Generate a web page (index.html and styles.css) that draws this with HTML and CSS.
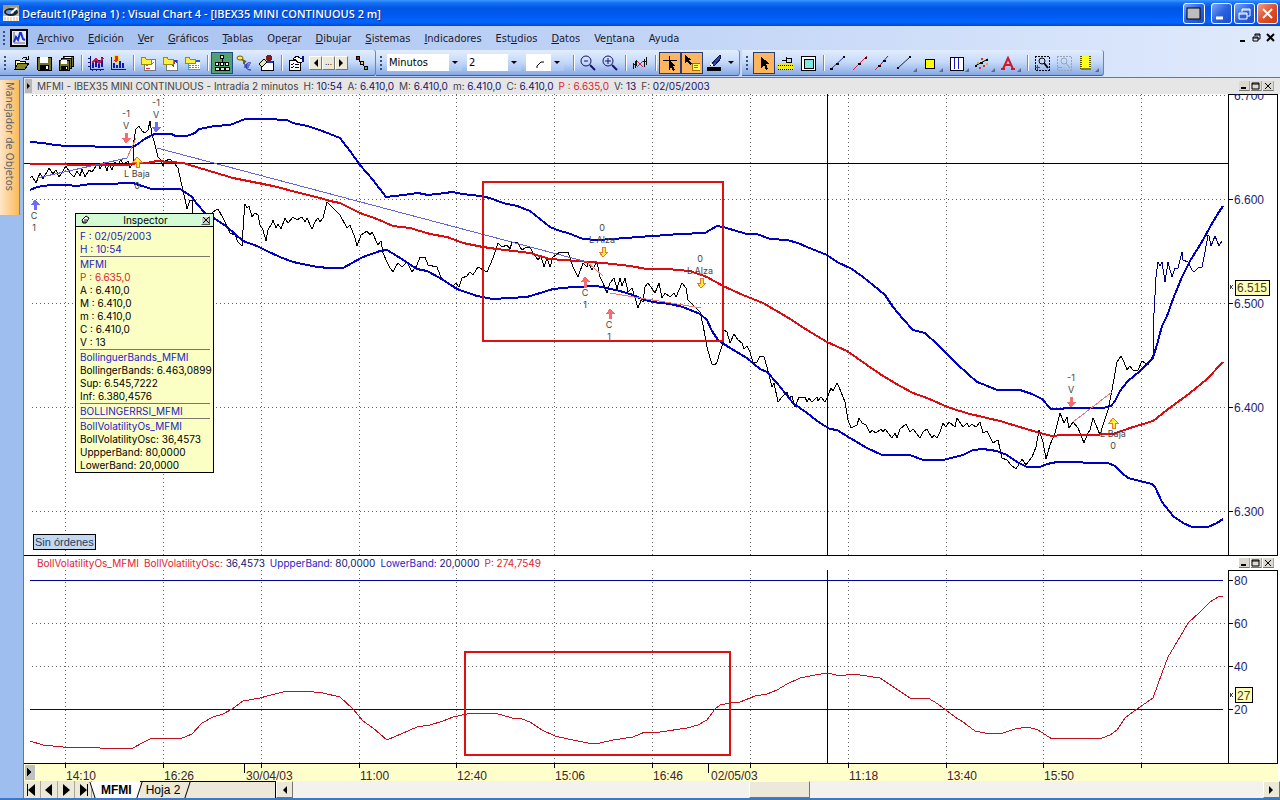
FILE: index.html
```html
<!DOCTYPE html>
<html lang="es">
<head>
    <meta charset="UTF-8">
    <meta name="viewport" content="width=device-width, initial-scale=1.0">
    <title>Visual Chart 4</title>
    <link rel="stylesheet" href="styles.css">
</head>
<body>
    <header class="titlebar">
        <svg class="app-logo" width="16" height="16" viewBox="0 0 16 16">
            <rect width="16" height="11" fill="#c9b99a"/>
            <path d="M0 0h16v4L9 2 0 5z" fill="#a89878"/>
            <ellipse cx="8" cy="7" rx="7" ry="4" fill="#10243c"/>
            <ellipse cx="7" cy="7" rx="4" ry="2" fill="#6aa0d8"/>
            <path d="M8 8l6-5" stroke="#fff" stroke-width="2"/>
            <rect y="11" width="16" height="5" fill="#fff"/>
            <path d="M1 13h14M1 15h14" stroke="#e8b070" stroke-dasharray="2 1"/>
        </svg>
        <span class="title-text">Default1(Página 1) : Visual Chart 4 - [IBEX35 MINI CONTINUOUS 2 m]</span>
        <button class="win-btn win-extra" aria-label="Monitor"><svg width="20" height="20" viewBox="0 0 20 20"><rect x="3" y="4" width="13" height="11" fill="#bdbdbd" stroke="#000"/></svg></button>
        <button class="win-btn" aria-label="Minimizar"><svg width="20" height="20" viewBox="0 0 20 20"><path d="M4 14h7" stroke="#fff" stroke-width="3"/></svg></button>
        <button class="win-btn" aria-label="Restaurar"><svg width="20" height="20" viewBox="0 0 20 20" fill="none" stroke="#fff"><path d="M7 8V5h8v7h-3M7 6h8"/><path d="M4 9h8v6H4zM4 10h8"/></svg></button>
        <button class="win-btn win-close" aria-label="Cerrar"><svg width="20" height="20" viewBox="0 0 20 20"><path d="M5 5l9 9M14 5l-9 9" stroke="#fff" stroke-width="2"/></svg></button>
    </header>

    <nav class="menubar">
        <span class="grip"></span>
        <svg class="doc-icon" width="18" height="18" viewBox="0 0 18 18"><rect x="1" y="1" width="16" height="16" fill="#e8ecff" stroke="#000" stroke-width="2"/><path d="M4 3v11h11" fill="none" stroke="#667"/><path d="M4 13l2-5 2 3 2-7h1l2 6 2 1" fill="none" stroke="#1a2ae0" stroke-width="2"/></svg>
        <a href="#"><u>A</u>rchivo</a>
        <a href="#"><u>E</u>dición</a>
        <a href="#"><u>V</u>er</a>
        <a href="#"><u>G</u>ráficos</a>
        <a href="#"><u>T</u>ablas</a>
        <a href="#">Ope<u>r</u>ar</a>
        <a href="#"><u>D</u>ibujar</a>
        <a href="#"><u>S</u>istemas</a>
        <a href="#"><u>I</u>ndicadores</a>
        <a href="#">Est<u>u</u>dios</a>
        <a href="#"><u>D</u>atos</a>
        <a href="#">Ve<u>n</u>tana</a>
        <a href="#">Ayuda</a>
        <div class="mdi-buttons">
            <button aria-label="Minimizar gráfico"><svg width="10" height="10" viewBox="0 0 10 10"><path d="M2 8h5" stroke="#000" stroke-width="2"/></svg></button>
            <button aria-label="Restaurar gráfico"><svg width="10" height="10" viewBox="0 0 10 10" fill="none" stroke="#000"><path d="M3 3V1h5v5H6M3 2h5M1 4h5v4H1zM1 5h5"/></svg></button>
            <button aria-label="Cerrar gráfico"><svg width="10" height="10" viewBox="0 0 10 10"><path d="M1 1l7 7M8 1L1 8" stroke="#000" stroke-width="2"/></svg></button>
        </div>
    </nav>

    <div class="toolbars">
        <div class="toolbar">
            <span class="grip"></span>
            <button class="tool" aria-label="Abrir"><svg viewBox="0 0 16 16"><path d="M1 14V5h4l1 1h5v3" fill="#ffff9c" stroke="#000"/><path d="M1 14l3-6h11l-4 6z" fill="#84842c" stroke="#000"/><path d="M8 4q3-4 5 0M14 1v3h-3" fill="none" stroke="#000"/></svg></button>
            <button class="tool" aria-label="Guardar"><svg viewBox="0 0 16 16"><path d="M1 2h14v13H2l-1-1z" fill="#74742c" stroke="#000"/><rect x="4" y="2" width="8" height="6" fill="#fff"/><rect x="4" y="10" width="9" height="5" fill="#000"/><rect x="10" y="11" width="2" height="3" fill="#fff"/></svg></button>
            <button class="tool" aria-label="Guardar todo"><svg viewBox="0 0 16 16"><path d="M5 1h10v10H5z" fill="#74742c" stroke="#000"/><path d="M3 3h10v10H3z" fill="#74742c" stroke="#000"/><path d="M1 5h10v10H1z" fill="#74742c" stroke="#000"/><path d="M3 5h6v4H3zM7 2h6v1H7zM5 4h6v0z" fill="#fff"/><path d="M3 11h7v4H3z"/><path d="M8 12h1v2H8z" fill="#fff"/></svg></button>
            <span class="sep"></span>
            <button class="tool" aria-label="Gráfico de barras"><svg viewBox="0 0 16 16"><path d="M2 1v13h14M0 3h2M0 7h2M0 11h2M4 14v2M8 14v2M12 14v2" fill="none" stroke="#10107c"/><path d="M5 6v7M8 4v8M11 5v8M14 2v10" stroke="#1616a8" stroke-width="2"/><path d="M4 8l4-4 3 4 4-5" fill="none" stroke="#d81830" stroke-width="2"/></svg></button>
            <button class="tool" aria-label="Insertar indicador"><svg viewBox="0 0 16 16"><path d="M1 2v12h15" fill="none" stroke="#10107c"/><path d="M4 8v5M7 10v3M10 6v7M13 8v5" stroke="#1616a8" stroke-width="2"/><path d="M4 0h4v4h2l-4 4-4-4h2z" fill="#e83020" stroke="#f8e030"/></svg></button>
            <span class="sep"></span>
            <button class="tool" aria-label="Nuevo gráfico"><svg viewBox="0 0 16 16"><rect x="4" y="4" width="11" height="11" fill="#fff" stroke="#777"/><path d="M6 11l3-2 2 1 3-3" fill="none" stroke="#30b050"/><path d="M6 13h4" stroke="#d33"/><path d="M1 2h4l1 2h5v5H1z" fill="#fff040" stroke="#9a8a10"/></svg></button>
            <button class="tool" aria-label="Nueva tabla"><svg viewBox="0 0 16 16"><rect x="4" y="5" width="11" height="10" fill="#fff" stroke="#777"/><path d="M8 8l4 5 1-8" fill="#e02020"/><path d="M12 5h3v4z" fill="#2038c0"/><path d="M1 2h4l1 2h5v5H1z" fill="#fff040" stroke="#9a8a10"/></svg></button>
            <button class="tool" aria-label="Nueva página"><svg viewBox="0 0 16 16"><rect x="4" y="5" width="12" height="9" fill="#fff" stroke="#59a"/><path d="M4 6h12" stroke="#2060d0" stroke-width="2"/><path d="M5 10h10M5 12h10" stroke="#3a8cd0" stroke-dasharray="2 1"/><path d="M1 2h4l1 2h5v4H1z" fill="#fff040" stroke="#9a8a10"/></svg></button>
            <span class="sep"></span>
            <button class="tool tool-green" aria-label="Manejador de objetos"><svg viewBox="0 0 16 16" fill="none" stroke="#000"><path d="M8 4v5M3 9V7h10v2"/><circle cx="8" cy="2" r="2" fill="#d8f0d8"/><circle cx="3" cy="9" r="2" fill="#fff"/><circle cx="8" cy="9" r="2" fill="#fff"/><circle cx="13" cy="9" r="2" fill="#fff"/><path d="M1 15v-3h4v3zM6 15v-3h4v3zM11 15v-3h4v3z" fill="#d8f0d8"/></svg></button>
            <button class="tool" aria-label="Divisas"><svg class="smooth" viewBox="0 0 16 16" fill="none"><path d="M5 4l5 3M8 6v3" stroke="#6a6210" stroke-width="2"/><ellipse cx="4" cy="3" rx="3" ry="2" stroke="#6a6210" fill="#ffef40"/><path d="M15 8q-5-1-5 3t5 4M8 10h6M8 12h5" stroke="#1818b0"/></svg></button>
            <button class="tool" aria-label="Orden"><svg viewBox="0 0 16 16"><path d="M3 6h12v9H3z" fill="#fff" stroke="#000"/><path d="M3 7h12" stroke="#1040c0" stroke-width="2"/><path d="M1 9l5-5 3 3-5 5z" fill="#e8e8b0" stroke="#000"/><circle cx="11" cy="3" r="3" fill="#801818"/></svg></button>
            <span class="sep"></span>
            <button class="tool" aria-label="Propiedades"><svg viewBox="0 0 16 16"><rect x="1" y="5" width="11" height="10" fill="#fff" stroke="#000"/><path d="M3 9l1 1 2-2M7 9h4M3 12l1 1 2-2M7 12h4" fill="none" stroke="#000"/><path d="M5 4l4-3 3 2h2v4l-4 1-2-3z" fill="#fff" stroke="#000"/><path d="M14 1h2v6h-2z" fill="#10107c"/></svg></button>
            <div class="spin">
                <button aria-label="Anterior"><svg width="5" height="8" viewBox="0 0 5 8"><path d="M5 0v8L1 4z"/></svg></button>
                <button>...</button>
                <button aria-label="Siguiente"><svg width="5" height="8" viewBox="0 0 5 8"><path d="M0 0v8l4-4z"/></svg></button>
            </div>
            <button class="tool" aria-label="Enlaces"><svg viewBox="0 0 16 16"><path d="M3 3l9 10" stroke="#000"/><rect x="2" y="1" width="3" height="3" fill="#b01818" stroke="#000"/><rect x="6" y="6" width="3" height="3" fill="#e8d820" stroke="#000"/><rect x="10" y="11" width="3" height="3" fill="#58b858" stroke="#000"/></svg></button>
        </div>
        <div class="toolbar">
            <span class="grip"></span>
            <label class="combo combo-unit"><select aria-label="Unidad"><option>Minutos</option></select></label>
            <label class="combo combo-num"><select aria-label="Compresión"><option>2</option></select></label>
            <label class="combo combo-line"><select aria-label="Tipo de línea"><option></option></select><svg width="8" height="8" viewBox="0 0 8 8"><path d="M1 8V6l4-4h3" fill="none" stroke="#000"/></svg></label>
            <span class="sep"></span>
            <button class="tool" aria-label="Alejar"><svg class="smooth" viewBox="0 0 16 16" fill="none" stroke="#14146c"><circle cx="6" cy="6" r="5"/><path d="M4 6h4"/><path d="M10 10l5 5" stroke-width="2"/></svg></button>
            <button class="tool" aria-label="Acercar"><svg class="smooth" viewBox="0 0 16 16" fill="none" stroke="#14146c"><circle cx="6" cy="6" r="5"/><path d="M3 6h6M6 3v6"/><path d="M10 10l5 5" stroke-width="2"/></svg></button>
            <span class="sep"></span>
            <button class="tool" aria-label="Borrar serie"><svg viewBox="0 0 16 16" fill="none" stroke="#111"><path d="M1 8v6M3 6v7M1 9h3M4 5v6M12 4v8M14 2v8M11 6h4"/><path d="M5 6l6 6M11 6l-6 6" stroke="#e02040"/></svg></button>
            <span class="sep"></span>
            <button class="tool tool-on" aria-label="Cursor"><svg viewBox="0 0 16 16"><path d="M1 5h14M7 1v14" stroke="#000"/><path d="M7 5v9l2-2 2 4 2-1-2-4h3z"/></svg></button>
            <button class="tool tool-on" aria-label="Inspector"><svg viewBox="0 0 16 16"><path d="M1 0v8l2-2 3 4 2-1-3-4h3z"/><rect x="8" y="8" width="8" height="7" fill="#ffff50" stroke="#a07000"/><path d="M10 10h4M10 12h4" stroke="#a07000"/></svg></button>
            <button class="tool" aria-label="Color de línea"><svg viewBox="0 0 16 16"><path d="M5 10l6-7 3-3 1 3-6 7z" fill="#2840b8" stroke="#10184c"/><path d="M4 8l4 2-3 1z" fill="#fff"/><rect x="1" y="12" width="14" height="4"/></svg></button>
            <button class="tool-drop" aria-label="Más colores"></button>
        </div>
        <div class="toolbar toolbar-draw">
            <span class="grip"></span>
            <button class="tool tool-on" aria-label="Seleccionar"><svg viewBox="0 0 16 16"><path d="M5 2v11l3-3 2 5 2-1-2-5h4z"/></svg></button>
            <button class="tool" aria-label="Regla"><svg viewBox="0 0 16 16"><path d="M4 5h4M8 2v6M8 3h5v4H8" fill="none" stroke="#000"/><rect x="0" y="9" width="16" height="6" fill="#f0e820"/><path d="M0 10h16M0 14h16" stroke="#000" stroke-dasharray="1 1"/></svg></button>
            <button class="tool" aria-label="Marco"><svg viewBox="0 0 16 16"><rect x="1" y="1" width="14" height="14" fill="#fff" stroke="#000"/><rect x="4" y="4" width="9" height="9" fill="#80e8e0" stroke="#000"/></svg></button>
            <span class="sep"></span>
            <button class="tool" aria-label="Segmento"><svg class="smooth" viewBox="0 0 16 16"><path d="M1 14L14 2" stroke="#2030b0"/><path d="M0 13h3v2H0zM6 8h3v2H6zM13 1h2v2h-2z"/></svg></button>
            <button class="tool" aria-label="Semirrecta"><svg class="smooth" viewBox="0 0 16 16"><path d="M1 15L15 1" stroke="#e02040"/><path d="M6 8h3v2H6zM13 2h2v2h-2z"/></svg></button>
            <button class="tool" aria-label="Recta"><svg class="smooth" viewBox="0 0 16 16"><path d="M1 15l6-6" stroke="#e02040"/><path d="M7 9l7-8" stroke="#2030b0"/><path d="M4 10h3v2H4zM9 5h3v2H9z"/></svg></button>
            <button class="tool tool-more" aria-label="Líneas"><svg class="smooth" viewBox="0 0 16 16"><path d="M2 13L14 2" stroke="#223"/><path d="M1 12h2v2H1zM13 1h2v2h-2z"/></svg></button>
            <button class="tool tool-more" aria-label="Figuras"><svg viewBox="0 0 16 16"><rect x="3" y="4" width="9" height="9" fill="#ffff00" stroke="#000"/></svg></button>
            <button class="tool tool-more" aria-label="Bandas"><svg viewBox="0 0 16 16"><rect x="2" y="2" width="13" height="13" fill="#fff" stroke="#000"/><path d="M6 3v11M10 3v11" stroke="#1818c0"/></svg></button>
            <button class="tool tool-more" aria-label="Regresión"><svg class="smooth" viewBox="0 0 16 16"><path d="M1 11l13-7" stroke="#000"/><path d="M1 10h2v2H1zM6 7h3v2H6zM12 4h2v2h-2z"/><path d="M7 3h2v2H7zM9 10h2v2H9zM5 12h2v2H5z" fill="#e03020"/><path d="M3 7h2v2H3zM12 8h2v2h-2z" fill="#e0b020"/></svg></button>
            <button class="tool tool-more" aria-label="Texto"><svg class="smooth" viewBox="0 0 16 16" fill="none" stroke="#d01828" stroke-width="2"><path d="M3 14L8 3l5 11M5 10h6M1 14h4M11 14h4"/></svg></button>
            <span class="sep"></span>
            <button class="tool" aria-label="Zoom de área"><svg viewBox="0 0 16 16" fill="none" stroke="#000"><rect x="1" y="1" width="14" height="14" stroke-dasharray="2 1"/><g class="smooth"><circle cx="8" cy="6" r="3"/><path d="M10 8l4 5" stroke-width="2"/></g><path d="M1 12h5M3 10v5" stroke="#b01848"/></svg></button>
            <button class="tool" aria-label="Quitar zoom" disabled><svg viewBox="0 0 16 16" fill="none" stroke="#98a4b4"><rect x="1" y="1" width="14" height="14" stroke-dasharray="2 1"/><g class="smooth"><circle cx="8" cy="6" r="3"/><path d="M10 8l4 5"/></g><path d="M2 12h4"/></svg></button>
            <button class="tool tool-more" aria-label="Notas"><svg viewBox="0 0 16 16"><path d="M3 1h10v13H3z" fill="#ffff20"/><path d="M3 1v13M12 1v13" stroke="#504800" stroke-dasharray="1 1" stroke-width="2"/><path d="M3 14h10" stroke="#8a7c00" stroke-width="2"/></svg></button>
        </div>
    </div>

    <main class="workspace">
        <aside class="sidebar"><button class="side-tab">Manejador de Objetos</button></aside>

        <section class="sheet">
            <div class="pane-head">
                <span class="pane-play"></span>
                <span class="pane-name">MFMI - IBEX35 MINI CONTINUOUS - Intradía 2 minutos</span>
                <span>H: <b>10:54</b></span>
                <span>A: <b>6.410,0</b></span>
                <span>M: <b>6.410,0</b></span>
                <span>m: <b>6.410,0</b></span>
                <span>C: <b>6.410,0</b></span>
                <span class="red">P : 6.635,0</span>
                <span>V: <b>13</b></span>
                <span>F: <b>02/05/2003</b></span>
                <div class="pane-btns">
                    <button aria-label="Minimizar panel"><svg viewBox="0 0 10 8"><path d="M2 6h5" stroke="#000" stroke-width="2"/></svg></button>
                    <button aria-label="Maximizar panel"><svg viewBox="0 0 10 8"><path d="M1 1h7v6H1zM1 2h7" fill="none" stroke="#000"/></svg></button>
                    <button aria-label="Cerrar panel"><svg viewBox="0 0 10 8"><path d="M2 1l6 6M8 1L2 7" stroke="#000"/></svg></button>
                </div>
            </div>

            <div class="chart-pane">
                <svg class="chart" viewBox="24 94 1256 462">
                    <path class="grid" d="M32 95H1228M32 199H1228M32 303H1228M32 407H1228M32 511H1228M65 94V555M163 94V555M261 94V555M359 94V555M456 94V555M554 94V555M652 94V555M750 94V555M848 94V555M946 94V555M1043 94V555M1141 94V555"/>
                    <path class="cross" d="M24 163H1228M827 94V555"/>

                    <!-- price -->
                    <polyline class="price" points="30,178 32,176 36,183 40,173 43,179 49,168 53,174 56,170 59,177 66,166 70,173 74,177 77,171 80,176 82,169 85,177 89,170 92,172 98,163 100,169 104,162 107,171 109,163 112,170 115,162 118,166 121,159 123,165 128,161 130,168 133,162 134,140 136,129 139,126 142,131 145,133 148,130 150,121 152,134 155,145 158,157 161,160 163,166 165,161 170,159 174,163 178,168 181,182 185,199 187,209 190,200 192,200 193,214 205,222 213,212 218,209 223,218 230,233 235,235 238,242 242,246 244,215 245,204 247,208 249,206 252,217 255,213 258,215 260,225 263,230 266,241 268,230 272,223 273,220 276,228 278,224 281,229 285,218 288,223 293,217 297,220 302,217 305,222 307,218 312,229 315,222 318,218 320,222 323,218 327,202 330,205 340,215 347,228 350,225 355,238 357,246 361,235 364,233 367,231 370,235 372,232 378,245 381,241 383,253 387,262 390,268 393,272 395,268 398,263 402,267 407,262 412,272 417,265 420,257 425,257 428,265 437,267 442,280 447,282 452,287 456,283 459,287 462,278 467,276 470,272 473,275 478,267 487,272 493,258 498,243 502,247 507,245 510,249 512,242 517,242 522,250 527,247 530,247 533,253 538,260 541,256 544,267 547,258 550,267 553,257 560,252 568,252 573,267 578,277 583,263 587,267 588,262 592,270 597,262 600,277 603,283 607,293 610,283 614,278 617,289 620,278 622,286 625,278 628,292 632,288 638,308 641,300 643,302 645,287 648,283 653,290 655,293 659,283 662,298 665,293 670,297 674,293 676,297 682,283 686,288 688,300 695,307 700,312 703,325 707,347 710,358 712,364 715,365 717,362 720,352 723,343 724,330 727,332 730,343 734,334 738,340 742,343 744,349 747,346 750,352 753,363 757,362 760,356 764,357 767,367 772,387 774,383 778,402 782,397 787,392 789,398 792,396 795,407 799,397 805,397 807,402 809,398 812,402 817,397 818,401 821,397 825,402 827,398 831,388 833,391 837,383 839,387 845,402 848,420 851,428 857,425 859,418 862,423 866,425 870,433 872,430 876,433 881,429 883,432 885,429 892,438 895,433 897,438 900,429 906,424 908,428 910,432 913,429 920,438 923,432 927,429 932,438 934,435 937,438 940,432 943,423 946,427 949,422 955,427 957,418 963,427 967,423 969,427 972,424 976,427 980,422 983,433 987,431 993,443 998,440 1002,458 1007,460 1011,465 1016,469 1022,459 1026,465 1032,457 1036,447 1039,430 1043,442 1046,459 1050,445 1055,433 1060,413 1064,423 1067,417 1069,428 1073,422 1078,428 1084,443 1087,435 1090,430 1093,418 1096,425 1100,435 1103,425 1108,410 1112,390 1115,373 1117,362 1121,356 1124,362 1127,370 1130,366 1133,370 1138,370 1142,361 1148,365 1153,355"/>
                    <polyline class="price navy" points="1153,355 1154,313 1156,277 1158,262 1160,266 1162,262 1165,282 1168,262 1172,277 1175,268 1178,268 1182,252 1183,260 1188,262 1192,270 1194,272 1198,268 1202,267 1205,252 1208,235 1209,236 1211,246 1215,236 1219,246 1222,241"/>

                    <!-- bollinger bands -->
                    <polyline class="band" points="30,142 43,143 55,145 67,146 93,146 97,147 133,147 138,144 143,140 152,135 155,134 172,134 175,136 187,136 195,133 199,129 215,126 230,125 245,119 267,119 287,120 293,123 307,126 317,129 330,134 340,138 350,151 360,165 373,180 386,197 403,195 418,193 428,195 445,193 452,192 463,194 480,196 490,198 503,203 517,206 530,211 540,219 550,227 560,231 568,233 583,239 597,240 613,239 638,237 653,236 680,234 705,233 710,230 717,226 723,227 733,230 747,234 757,234 770,239 787,240 798,243 807,247 827,255 837,262 852,269 863,277 873,285 885,295 893,307 903,319 913,330 925,333 938,345 957,364 977,382 985,385 997,390 1020,390 1032,394 1042,399 1051,409 1060,409 1067,408 1103,408 1111,406 1115,401 1120,391 1128,381 1140,371 1153,358 1158,341 1162,326 1167,316 1173,299 1182,277 1190,261 1203,240 1210,227 1217,215 1223,206"/>
                    <polyline class="band" points="30,190 37,187 50,185 67,185 77,186 90,184 103,184 133,183 142,186 152,189 180,189 185,192 192,197 197,204 205,213 217,220 227,227 243,241 257,246 267,251 280,257 293,262 317,267 330,268 343,268 352,263 363,257 380,251 387,250 397,256 417,269 427,271 440,278 457,289 477,296 493,299 527,297 537,294 553,289 573,287 597,286 620,291 633,295 642,299 653,302 670,304 683,307 700,314 707,320 712,331 718,340 730,348 747,358 760,369 767,372 777,383 793,403 807,413 820,423 830,429 837,430 850,438 867,448 882,455 910,455 923,460 943,460 963,455 973,450 983,449 997,451 1007,455 1017,462 1027,467 1040,467 1047,464 1057,462 1108,463 1115,466 1122,473 1128,478 1152,484 1155,487 1162,502 1173,516 1183,523 1192,527 1208,527 1217,523 1223,519"/>
                    <polyline class="band mean" points="30,164 60,164 73,165 127,165 137,163 147,163 157,161 170,162 183,163 193,166 213,172 233,178 253,182 273,186 300,193 320,198 330,201 340,203 360,213 377,219 393,226 410,228 430,234 447,237 463,243 483,247 497,249 530,253 550,259 577,261 603,263 630,266 647,269 667,269 690,271 707,277 723,286 743,295 763,303 787,317 807,330 827,342 847,351 867,365 883,376 900,386 913,393 927,398 950,408 970,414 1000,421 1023,428 1040,433 1052,436 1063,435 1087,435 1113,434 1130,428 1153,421 1167,410 1190,393 1207,379 1223,362"/>

                    <!-- trades -->
                    <path class="trade-win" d="M37 178L127 158M157 148L587 262"/>
                    <path class="trade-loss" d="M127 158L136 138M587 262L603 276M610 293L701 308M1073 422L1112 392"/>
                    <g class="arrow-red">
                        <path d="M125 133h3v5h3l-5 6-4-6h3z"/>
                        <path d="M1070 397h3v5h3l-5 6-4-6h3z"/>
                        <path d="M584 288h3v-6h3l-5-6-4 6h3z"/>
                        <path d="M609 319h3v-5h3l-5-6-4 6h3z"/>
                    </g>
                    <g class="arrow-blue">
                        <path d="M155 122h3v5h3l-5 6-4-6h3z"/>
                        <path d="M34 210h3v-5h3l-5-6-4 6h3z"/>
                    </g>
                    <g class="arrow-gold">
                        <path d="M136 167h3v-5h3l-5-5-4 5h3z"/>
                        <path d="M602 247h3v5h3l-5 5-4-5h3z"/>
                        <path d="M700 278h3v5h3l-5 5-4-5h3z"/>
                        <path d="M1112 428h3v-5h3l-5-5-4 5h3z"/>
                    </g>
                    <g class="trade-text">
                        <text x="126" y="117">-1</text><text x="126" y="129">V</text>
                        <text x="156" y="106">-1</text><text x="156" y="118">V</text>
                        <text x="137" y="177">L Baja</text><text x="137" y="189">0</text>
                        <text x="34" y="219">C</text><text x="34" y="231">1</text>
                        <text x="602" y="231">0</text><text x="602" y="243">L Alza</text>
                        <text x="585" y="296">C</text><text x="585" y="308">1</text>
                        <text x="609" y="328">C</text><text x="609" y="340">1</text>
                        <text x="700" y="262">0</text><text x="700" y="274">L Alza</text>
                        <text x="1071" y="381">-1</text><text x="1071" y="393">V</text>
                        <text x="1113" y="437">L Baja</text><text x="1113" y="449">0</text>
                    </g>
                    <rect class="highlight" x="483" y="182" width="240" height="159"/>

                    <!-- price axis -->
                    <path class="frame" d="M1228 94V555M1277 94V555M24 555H1278M1228 94H1278M1228 199h5M1228 303h5M1228 407h5M1228 511h5"/>
                    <g class="scale">
                        <text x="1234" y="100">6.700</text>
                        <text x="1234" y="204">6.600</text>
                        <text x="1234" y="308">6.500</text>
                        <text x="1234" y="412">6.400</text>
                        <text x="1234" y="516">6.300</text>
                        <path class="pointer" d="M1233 285l-2 2 2 2M1231 285l-1 2 1 2"/>
                        <rect class="tag" x="1235" y="280" width="34" height="15"/>
                        <text class="tag-text" x="1237" y="292">6.515</text>
                    </g>
                </svg>

                <div class="inspector">
                    <div class="inspector-head">
                        <svg width="10" height="10" viewBox="0 0 10 10"><path d="M2 5l4-4 3 2-3 5H3z" fill="#fff" stroke="#000"/><path d="M2 7h4M4 5h3" stroke="#000"/></svg>
                        <span>Inspector</span>
                        <button aria-label="Cerrar inspector"><svg width="6" height="6" viewBox="0 0 6 6"><path d="M0 0l6 6M6 0L0 6" stroke="#000"/></svg></button>
                    </div>
                    <div class="inspector-body">
                        <div class="group">
                            <p class="blue">F : 02/05/2003</p>
                            <p class="blue">H : 10:54</p>
                        </div>
                        <div class="group">
                            <p class="blue">MFMI</p>
                            <p class="red">P : 6.635,0</p>
                            <p>A : 6.410,0</p>
                            <p>M : 6.410,0</p>
                            <p>m : 6.410,0</p>
                            <p>C : 6.410,0</p>
                            <p>V : 13</p>
                        </div>
                        <div class="group">
                            <p class="blue">BollinguerBands_MFMI</p>
                            <p>BollingerBands: 6.463,0899</p>
                            <p>Sup: 6.545,7222</p>
                            <p>Inf: 6.380,4576</p>
                        </div>
                        <div class="group">
                            <p class="blue">BOLLINGERRSI_MFMI</p>
                        </div>
                        <div class="group">
                            <p class="blue">BollVolatilityOs_MFMI</p>
                            <p>BollVolatilityOsc: 36,4573</p>
                            <p>UppperBand: 80,0000</p>
                            <p>LowerBand: 20,0000</p>
                        </div>
                    </div>
                </div>
                <button class="orders">Sin órdenes</button>
            </div>

            <div class="pane-head pane-head-osc">
                <span class="red">BollVolatilityOs_MFMI</span>
                <span class="red">BollVolatilityOsc: <b>36,4573</b></span>
                <span class="blue">UppperBand: <b>80,0000</b></span>
                <span class="blue">LowerBand: <b>20,0000</b></span>
                <span class="red">P: 274,7549</span>
                <div class="pane-btns">
                    <button aria-label="Minimizar panel"><svg viewBox="0 0 10 8"><path d="M2 6h5" stroke="#000" stroke-width="2"/></svg></button>
                    <button aria-label="Maximizar panel"><svg viewBox="0 0 10 8"><path d="M1 1h7v6H1zM1 2h7" fill="none" stroke="#000"/></svg></button>
                    <button aria-label="Cerrar panel"><svg viewBox="0 0 10 8"><path d="M2 1l6 6M8 1L2 7" stroke="#000"/></svg></button>
                </div>
            </div>

            <svg class="chart chart-osc" viewBox="24 570 1256 211">
                <path class="grid" d="M32 623H1228M32 666H1228M65 570V763M163 570V763M261 570V763M359 570V763M456 570V763M554 570V763M652 570V763M750 570V763M848 570V763M946 570V763M1043 570V763M1141 570V763"/>
                <path class="level" d="M30 580H1223M30 709H1223"/>
                <path class="cross" d="M827 570V763"/>
                <polyline class="osc" points="30,741 43,745 63,747 80,747 100,748 133,748 142,743 152,738 180,739 192,734 202,723 213,717 223,714 232,709 243,701 260,698 267,696 283,692 305,691 323,693 340,697 353,709 363,721 373,728 387,740 417,727 430,725 443,721 453,717 467,714 477,713 495,713 512,718 522,719 530,722 542,730 555,736 568,739 588,743 600,743 613,740 633,737 645,732 660,732 687,728 698,725 707,720 715,709 720,705 730,703 740,702 755,696 767,694 777,690 787,684 800,678 815,675 828,673 840,676 853,674 880,678 895,688 910,698 928,698 938,704 955,717 963,722 975,731 985,733 1000,734 1015,729 1028,727 1038,730 1052,739 1060,738 1102,738 1110,735 1117,730 1125,718 1137,709 1153,698 1162,673 1168,657 1180,637 1188,623 1200,612 1210,602 1218,597 1223,596"/>
                <rect class="highlight" x="465" y="652" width="265" height="103"/>
                <g class="scale">
                    <text x="1234" y="585">80</text>
                    <text x="1234" y="628">60</text>
                    <text x="1234" y="671">40</text>
                    <text x="1234" y="714">20</text>
                    <path class="pointer" d="M1233 693l-2 2 2 2M1231 693l-1 2 1 2"/>
                    <rect class="tag" x="1235" y="687" width="17" height="15"/>
                    <text class="tag-text" x="1237" y="700">27</text>
                </g>

                <!-- time axis -->
                <rect class="time-bg" x="24" y="764" width="1254" height="17"/>
                <rect class="time-btn" x="25" y="765" width="10" height="15"/>
                <path d="M27 768v8l4-4z"/>
                <path class="frame" d="M24 763H1278M1228 763V570H1277V763M1228 580h5M1228 623h5M1228 666h5M1228 709h5M65 763v5M163 763v5M244 763v10M261 763v5M359 763v5M456 763v5M554 763v5M652 763v5M708 763v10M750 763v5M848 763v5M946 763v5M1043 763v5M1141 763v5"/>
                <g class="time">
                    <text x="66" y="780">14:10</text>
                    <text x="164" y="780">16:26</text>
                    <text x="246" y="780">30/04/03</text>
                    <text x="360" y="780">11:00</text>
                    <text x="457" y="780">12:40</text>
                    <text x="555" y="780">15:06</text>
                    <text x="653" y="780">16:46</text>
                    <text x="711" y="780">02/05/03</text>
                    <text x="849" y="780">11:18</text>
                    <text x="947" y="780">13:40</text>
                    <text x="1044" y="780">15:50</text>
                </g>
            </svg>

            <footer class="tabs">
                <button class="nav-btn" aria-label="Primera hoja"><svg viewBox="0 0 16 12"><path d="M3 0h1v12H3zM11 0v12L4 6z"/></svg></button>
                <button class="nav-btn" aria-label="Hoja anterior"><svg viewBox="0 0 16 12"><path d="M11 0v12L4 6z"/></svg></button>
                <button class="nav-btn" aria-label="Hoja siguiente"><svg viewBox="0 0 16 12"><path d="M5 0v12l7-6z"/></svg></button>
                <button class="nav-btn" aria-label="Última hoja"><svg viewBox="0 0 16 12"><path d="M5 0v12l7-6zM12 0h1v12h-1z"/></svg></button>
                <button class="tab tab-active">MFMI</button>
                <button class="tab">Hoja 2</button>
                <span class="tab-rest"></span>
                <button class="scroll-btn" aria-label="Desplazar a la izquierda"><svg width="5" height="8" viewBox="0 0 5 8"><path d="M5 0v8L1 4z"/></svg></button>
                <div class="scroll-track"><div class="scroll-thumb"></div></div>
                <button class="scroll-btn" aria-label="Desplazar a la derecha"><svg width="5" height="8" viewBox="0 0 5 8"><path d="M0 0v8l4-4z"/></svg></button>
            </footer>
        </section>
    </main>
</body>
</html>
```
FILE: styles.css
```css
* {
    box-sizing: border-box;
}

body {
    margin: 0;
    min-height: 100vh;
    display: flex;
    flex-direction: column;
    background: #9fbef0;
    border-bottom: 2px solid #3a78d0;
    font-family: "DejaVu Sans Condensed", "DejaVu Sans", sans-serif;
    font-size: 11px;
    color: #000;
}

button {
    padding: 0;
    border: 0;
    background: none;
    font: inherit;
    color: inherit;
}

svg {
    display: block;
}

/* title bar */
.titlebar {
    display: flex;
    align-items: center;
    height: 26px;
    padding: 0 2px 0 3px;
    background: linear-gradient(#3c96ff 0, #1470f4 3px, #0055e5 8px, #0058ee 14px, #0066ff 22px, #0048d0 26px);
}

.title-text {
    flex: 1;
    margin-left: 3px;
    color: #fff;
    font-family: "Open Sans", "Noto Sans", sans-serif;
    font-size: 11px;
    font-weight: 600;
    white-space: nowrap;
    text-shadow: 1px 1px 0 #0a2c8c;
}

.win-btn {
    width: 21px;
    height: 21px;
    margin-left: 2px;
    border: 1px solid #fff;
    border-radius: 3px;
    background: linear-gradient(135deg, #7ea6f4, #2a62e0 50%, #1a4cd0);
}

.win-extra {
    width: 22px;
    margin-right: 4px;
}

.win-close {
    background: linear-gradient(135deg, #f0a088, #e0502c 50%, #c83c14);
}

/* menu */
.menubar {
    display: flex;
    align-items: center;
    gap: 14px;
    height: 24px;
    padding: 0 4px 0 3px;
    background: linear-gradient(90deg, #a4c0f0, #c4d6f7 55%, #e0eafc);
}

.menubar a {
    color: #1a1a2c;
    text-decoration: none;
}

.grip {
    flex: none;
    width: 2px;
    height: 14px;
    background: repeating-linear-gradient(#33517f 0 2px, transparent 2px 4px);
}

.menubar .grip {
    margin-right: -9px;
}

.doc-icon {
    margin-right: -5px;
}

.mdi-buttons {
    display: flex;
    gap: 4px;
    margin-left: auto;
}

/* toolbars */
.toolbars {
    display: flex;
    height: 27px;
    background: linear-gradient(90deg, #a4c0f0, #c4d6f7 55%, #e0eafc);
}

.toolbar {
    display: flex;
    align-items: center;
    height: 26px;
    padding: 0 2px 0 4px;
    border-bottom: 1px solid #3a5ea8;
    border-right: 1px solid #6484c4;
    border-radius: 0 3px 3px 0;
    background: linear-gradient(#e2edfe, #c4d9fa 50%, #86a8e4);
}

.toolbar .grip {
    margin-right: 5px;
}

.toolbar-draw {
    margin-left: 2px;
}

.tool {
    position: relative;
    display: flex;
    align-items: center;
    justify-content: center;
    flex: none;
    width: 22px;
    height: 22px;
}

.tool svg {
    width: 16px;
    height: 16px;
    shape-rendering: crispEdges;
}

.smooth,
.tool svg.smooth {
    shape-rendering: auto;
}

.tool-on {
    border: 1px solid #2a3c78;
    background: #fdb560;
}

.tool-green {
    border: 1px solid #1c4c8c;
    background: #52a070;
}

.tool-more {
    width: 26px;
    padding-right: 4px;
}

.tool-more::after {
    content: "";
    position: absolute;
    right: 2px;
    bottom: 2px;
    border: 2px solid #5c6c84;
    border-top-color: transparent;
    border-left-color: transparent;
}

.tool-drop {
    width: 12px;
    height: 22px;
}

.tool-drop::after,
.combo::after {
    content: "";
    display: block;
    width: 0;
    margin: 0 auto;
    border: 3px solid transparent;
    border-top-color: #000;
    border-bottom: 0;
}

.sep {
    flex: none;
    width: 1px;
    height: 16px;
    margin: 0 3px 0 4px;
    background: #6a8ccb;
    box-shadow: 1px 0 0 #fff;
}

.spin {
    display: flex;
    margin: 0 3px 0 2px;
}

.spin button {
    display: flex;
    align-items: center;
    justify-content: center;
    width: 13px;
    height: 14px;
    border: 1px solid;
    border-color: #fff #77756c #77756c #fff;
    background: #ece9d8;
    font-size: 8px;
}

.combo {
    position: relative;
    display: flex;
    align-items: center;
    height: 17px;
    margin-right: 5px;
    background: linear-gradient(#dbe8fd, #a9c5f2) right / 13px 100% no-repeat #fff;
}

.combo select {
    appearance: none;
    width: 100%;
    height: 17px;
    padding: 0 0 0 2px;
    border: 0;
    background: transparent;
    font: inherit;
}

.combo::after,
.combo svg {
    position: absolute;
    right: 4px;
}

.combo svg {
    right: 20px;
    top: 6px;
}

.combo-unit {
    width: 75px;
}

.combo-num {
    width: 54px;
}

.combo-line {
    width: 38px;
}

/* workspace */
.workspace {
    flex: 1;
    display: flex;
    align-items: stretch;
}

.sidebar {
    flex: none;
    width: 23px;
    padding-top: 3px;
}

.side-tab {
    width: 20px;
    height: 135px;
    padding: 2px 0;
    border-right: 1px solid #8a8468;
    background: linear-gradient(90deg, #ffe6c8, #fbba58);
    color: #5c6470;
    writing-mode: vertical-rl;
    text-align: left;
}

.sheet {
    flex: 1;
    min-width: 0;
    border-top: 1px solid #77756c;
    border-left: 1px solid #77756c;
    background: #fff;
    font-family: "Liberation Sans", Arial, sans-serif;
}

.pane-head {
    display: flex;
    align-items: center;
    gap: 5px;
    height: 16px;
    padding: 0 6px 0 1px;
    background: #e6e6e6;
    font-family: Inter, "Liberation Sans", sans-serif;
    font-size: 10px;
    color: #444;
    white-space: nowrap;
}

.pane-head b {
    font-weight: 400;
    color: #14146c;
}

.pane-head-osc {
    height: 14px;
    padding-left: 13px;
    background: #fff;
}

.pane-play {
    width: 7px;
    height: 14px;
    background: #b8b8b8;
}

.pane-play::after {
    content: "";
    display: block;
    margin: 4px 2px;
    border: 3px solid transparent;
    border-left-color: #000;
    border-right: 0;
}

.pane-head .red,
.red {
    color: #e01c30;
}

.pane-head .blue,
.blue {
    color: #1c1cc8;
}

.pane-btns {
    display: flex;
    gap: 1px;
    margin-left: auto;
}

.pane-btns button {
    width: 11px;
    height: 10px;
    border-bottom: 1px solid #77756c;
    border-right: 1px solid #aca899;
    background: #dcdad0;
}

.pane-btns svg {
    width: 10px;
    height: 8px;
}

/* charts */
.chart-pane {
    position: relative;
}

.chart {
    width: 100%;
    height: auto;
    shape-rendering: crispEdges;
}

.chart-osc {
    overflow: visible;
}

.chart polyline,
.chart .grid,
.chart .cross,
.chart .frame,
.chart .level,
.chart .highlight {
    fill: none;
}

.grid {
    stroke: #666;
    stroke-dasharray: 1 3;
}

.cross,
.frame {
    stroke: #000;
}

.price {
    stroke: #000;
}

.navy {
    stroke: #00007c;
}

.band {
    stroke: #0000c4;
    stroke-width: 2;
}

.mean {
    stroke: #dc0c10;
}

.osc {
    stroke: #c01020;
}

.level {
    stroke: #00009c;
}

.highlight {
    stroke: #e01010;
    stroke-width: 2;
}

.trade-win {
    stroke: #6464d8;
}

.trade-loss {
    stroke: #e87870;
}

.arrow-red {
    fill: #f46c6c;
}

.arrow-blue {
    fill: #6c6cf8;
}

.arrow-gold {
    fill: #fff040;
    stroke: #e87830;
}

.trade-text {
    fill: #444;
    font-family: Inter, "Liberation Sans", sans-serif;
    font-size: 9px;
    text-anchor: middle;
}

.scale {
    fill: #1c1c70;
    font-size: 12px;
}

.pointer {
    fill: none;
    stroke: #444;
}

.tag {
    fill: #ffffb8;
    stroke: #000;
}

.tag-text {
    fill: #4c3c14;
}

.time-bg {
    fill: #ffffcc;
}

.time-btn {
    fill: #c0c0c0;
}

.time {
    fill: #3c2430;
    font-size: 12px;
}

/* floating inspector */
.inspector {
    position: absolute;
    left: 51px;
    top: 119px;
    width: 139px;
    border: 1px solid #000;
    background: #fbffc4;
    font-family: Inter, "Liberation Sans", sans-serif;
    font-size: 10px;
}

.inspector-head {
    display: flex;
    align-items: center;
    height: 13px;
    padding: 0 3px 0 4px;
    border-bottom: 1px solid #000;
    background: #d4fcd4;
}

.inspector-head span {
    flex: 1;
    text-align: center;
}

.inspector-head button {
    display: flex;
    align-items: center;
    justify-content: center;
    width: 9px;
    height: 9px;
    border: 1px solid;
    border-color: #fff #555 #555 #fff;
    background: #c8d0c8;
}

.inspector-body {
    padding: 1px 3px 0 4px;
}

.group {
    padding-top: 1px;
    border-top: 1px solid #77756c;
}

.group:first-child {
    border-top-color: transparent;
}

.group p {
    margin: 0;
    line-height: 13px;
    white-space: nowrap;
}

.orders {
    position: absolute;
    left: 9px;
    bottom: 6px;
    height: 16px;
    padding: 0 1px;
    border: 1px solid #000;
    background: #c4d8f0;
    color: #24405c;
    font-size: 11px;
}

/* sheet tabs */
.tabs {
    position: relative;
    display: flex;
    height: 17px;
    background: #ece9d8;
}

.nav-btn {
    width: 17px;
    border-right: 1px solid #aca899;
}

.nav-btn svg {
    width: 16px;
    height: 12px;
}

.tab {
    position: relative;
    padding: 0 8px 0 6px;
    border-top: 1px solid #000;
    font-size: 12px;
}

.tab::after {
    content: "";
    position: absolute;
    top: 0;
    right: 0;
    width: 6px;
    height: 16px;
    border-right: 1px solid #000;
    transform: skewX(-18deg);
}

.tab-active {
    margin-left: 3px;
    border-top-color: #fff;
    background: #fff;
    font-weight: 700;
}

.tab-active::before {
    content: "";
    position: absolute;
    top: 0;
    left: -3px;
    width: 4px;
    height: 16px;
    border-left: 1px solid #000;
    background: #fff;
    transform: skewX(18deg);
}

.tab-rest {
    width: 88px;
    border-top: 1px solid #000;
    border-right: 1px solid #000;
}

.scroll-btn {
    display: flex;
    align-items: center;
    justify-content: center;
    width: 17px;
    border: 1px solid;
    border-color: #fff #77756c #77756c #fff;
    background: #ece9d8;
}

.scroll-track {
    flex: 1;
    background: #f4f2ec;
}

.scroll-thumb {
    width: 61px;
    height: 17px;
    margin-left: 47%;
    border: 1px solid;
    border-color: #fff #77756c #77756c #fff;
    background: #ece9d8;
}
```
